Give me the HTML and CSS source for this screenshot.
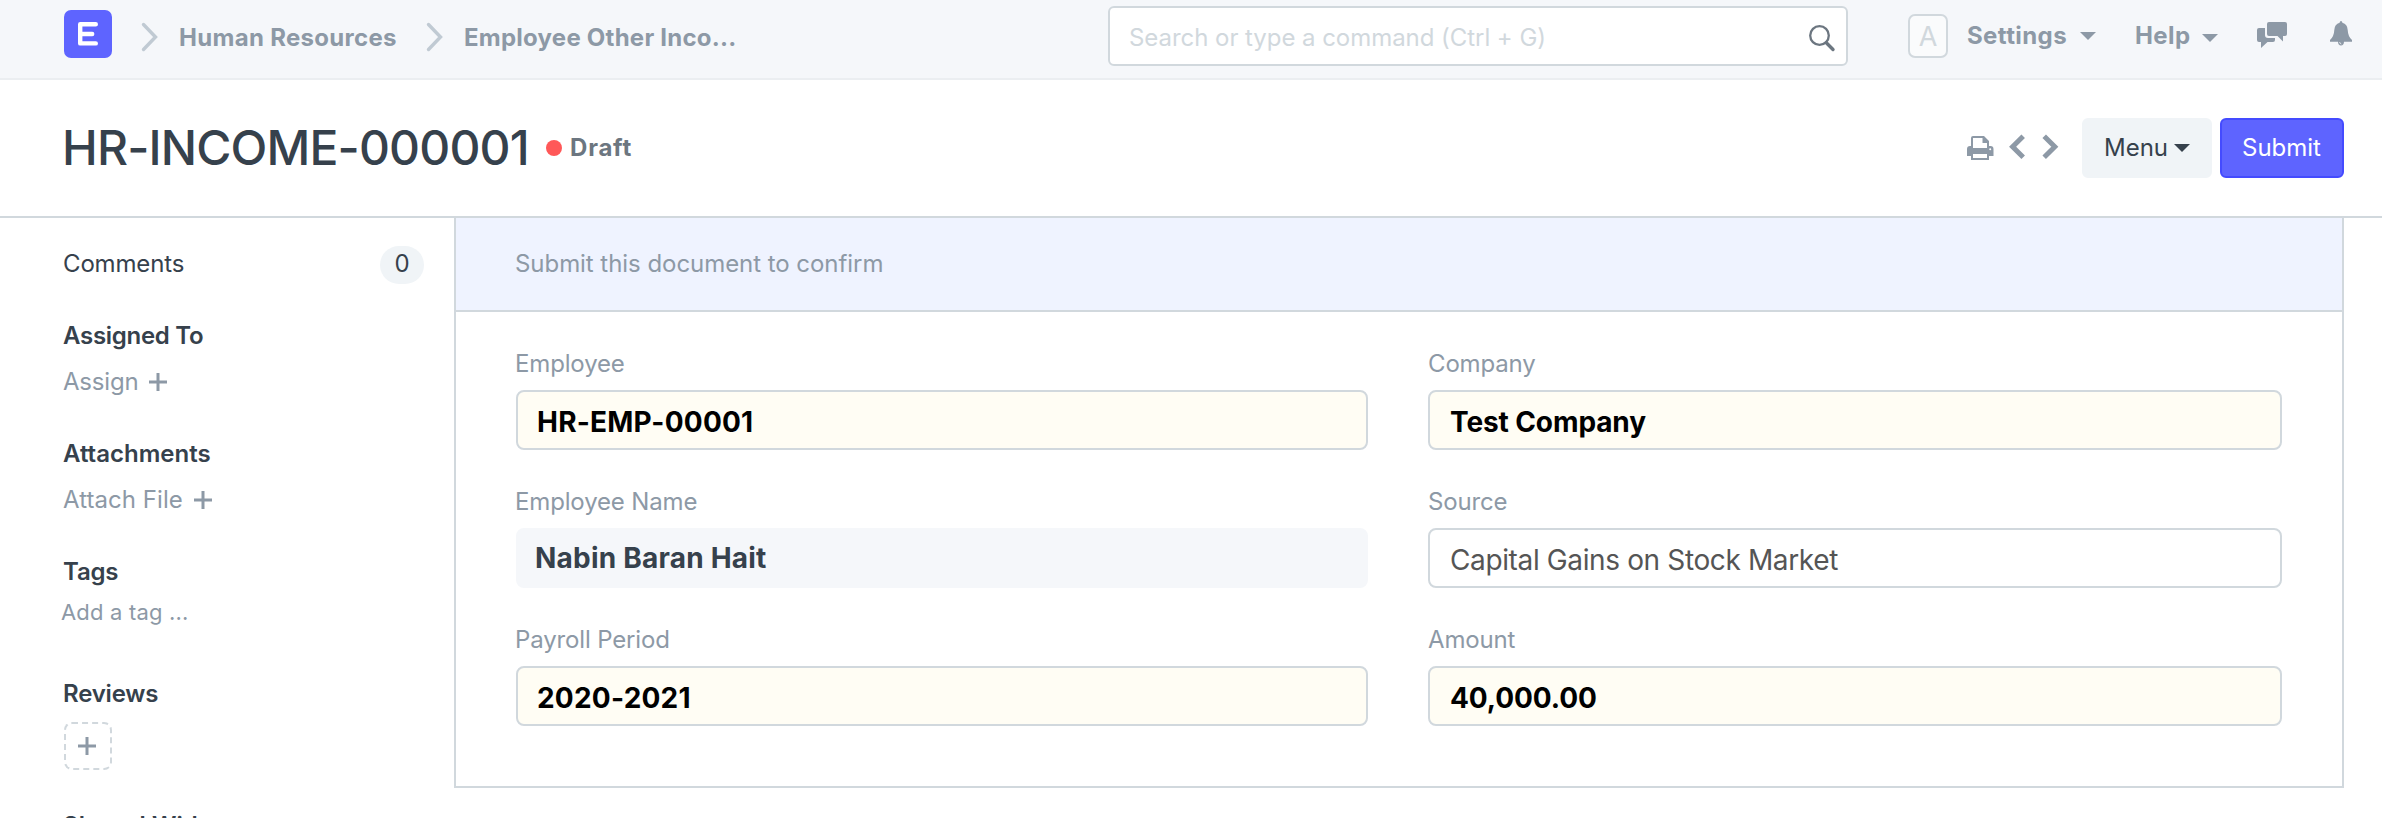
FILE: index.html
```html
<!DOCTYPE html>
<html lang="en">
<head>
<meta charset="utf-8">
<title>HR-INCOME-000001</title>
<link rel="stylesheet" href="styles.css">
</head>
<body>
<header class="navbar">
  <div class="logo"><svg width="48" height="48" viewBox="0 0 48 48"><path d="M31.800 14.200H16.200V33.400H31.800M16.200 24H28.200" fill="none" stroke="#fff" stroke-width="4.400" stroke-linecap="round" stroke-linejoin="round"/></svg></div>
  <nav class="crumbs">
    <svg class="crumb-sep" width="18" height="30" viewBox="0 0 18 30"><path d="M2.500 2.500L14.500 15L2.500 27.500" fill="none" stroke="#c0cad3" stroke-width="3.400" stroke-linecap="round"/></svg>
    <a class="crumb crumb-module">Human Resources</a>
    <svg class="crumb-sep" width="18" height="30" viewBox="0 0 18 30"><path d="M2.500 2.500L14.500 15L2.500 27.500" fill="none" stroke="#c0cad3" stroke-width="3.400" stroke-linecap="round"/></svg>
    <a class="crumb">Employee Other Inco...</a>
  </nav>
  <div class="search">
    <span class="search-text">Search or type a command (Ctrl + G)</span>
    <svg width="28" height="28" viewBox="0 0 28 28"><g fill="none" stroke="#6c7680"><circle cx="11.500" cy="11.500" r="9.300" stroke-width="2.300"/><path d="M18.300 18.800L25 25.500" stroke-width="3.400" stroke-linecap="round"/></g></svg>
  </div>
  <div class="nav-right">
    <span class="avatar">A</span>
    <span class="nav-item settings">Settings</span><i class="caret settings-caret"></i>
    <span class="nav-item help">Help</span><i class="caret help-caret"></i>
    <svg class="chat" width="30" height="27" viewBox="0 0 30 27"><path fill="#8d99a6" d="M12 0H28Q30 0 30 2V12Q30 14 28 14H26V19.500L20.500 14H12Q10 14 10 12V2Q10 0 12 0ZM2 6H8V13Q8 16 11 16H18V18Q18 20 16 20H10.500L4 26V20H2Q0 20 0 18V8Q0 6 2 6Z"/></svg>
    <svg class="bell" width="22" height="25" viewBox="0 0 22 25"><path fill="#8d99a6" d="M11 0Q12.200 0 12.400 1.800Q17.400 3 17.700 9Q18 15.500 22 19V20.700H14Q13.800 24.500 11 24.500Q8.200 24.500 8 20.700H0V19Q4 15.500 4.300 9Q4.600 3 9.600 1.800Q9.800 0 11 0Z"/><path d="M9.600 21Q9.800 22.800 11.300 23" fill="none" stroke="#f5f7fa" stroke-width=".8"/></svg>
  </div>
</header>
<section class="page-head">
  <h1 class="title">HR-INCOME-000001</h1>
  <span class="dot"></span><span class="status">Draft</span>
  <div class="actions">
    <svg class="print" width="27" height="25" viewBox="0 0 27 25"><path fill="#8d99a6" fill-rule="evenodd" d="M6 0H17L22 5V10H23.500Q26.500 10 26.500 13V20H22V24H4V20H0V13Q0 10 3 10H4V2Q4 0 6 0ZM6 2V12H20V7H15.500V2ZM6 18V22H20V18ZM23.200 12.200A1 1 0 1 0 23.200 14.200A1 1 0 1 0 23.200 12.200Z"/></svg>
    <svg class="prev" width="17" height="26" viewBox="0 0 17 26"><path d="M14.200 2.200L3.600 12.800L14.200 23.300" fill="none" stroke="#8d99a6" stroke-width="5"/></svg>
    <svg class="next" width="17" height="26" viewBox="0 0 17 26"><path d="M2.200 2.200L12.800 12.800L2.200 23.300" fill="none" stroke="#8d99a6" stroke-width="5"/></svg>
    <button class="btn btn-menu">Menu<i class="caret"></i></button>
    <button class="btn btn-primary">Submit</button>
  </div>
</section>
<main class="layout">
  <aside class="sidebar">
    <div class="side-row comments"><span>Comments</span><span class="badge">0</span></div>
    <section class="group">
      <h2 class="group-title assigned">Assigned To</h2>
      <a class="group-link assign">Assign<svg class="plus" width="18" height="18" viewBox="0 0 18 18"><path d="M9 0V18M0 9H18" stroke="#8d99a6" stroke-width="3"/></svg></a>
    </section>
    <section class="group">
      <h2 class="group-title attachments">Attachments</h2>
      <a class="group-link attach">Attach File<svg class="plus" width="18" height="18" viewBox="0 0 18 18"><path d="M9 0V18M0 9H18" stroke="#8d99a6" stroke-width="3"/></svg></a>
    </section>
    <section class="group tags">
      <h2 class="group-title">Tags</h2>
      <span class="tag-input">Add a tag ...</span>
    </section>
    <section class="group reviews">
      <h2 class="group-title">Reviews</h2>
      <span class="add-review"><svg width="18" height="18" viewBox="0 0 18 18"><path d="M9 0V18M0 9H18" stroke="#8d99a6" stroke-width="3"/></svg></span>
    </section>
    <section class="group shared"><h2 class="group-title">Shared With</h2></section>
  </aside>
  <article class="form">
    <div class="banner">Submit this document to confirm</div>
    <div class="fields">
      <div class="field"><label class="label">Employee</label><div class="input required link">HR-EMP-00001</div></div>
      <div class="field"><label class="label">Company</label><div class="input required">Test Company</div></div>
      <div class="field"><label class="label">Employee Name</label><div class="input readonly">Nabin Baran Hait</div></div>
      <div class="field"><label class="label">Source</label><div class="input source">Capital Gains on Stock Market</div></div>
      <div class="field"><label class="label">Payroll Period</label><div class="input required link">2020-2021</div></div>
      <div class="field"><label class="label">Amount</label><div class="input required">40,000.00</div></div>
    </div>
  </article>
</main>
</body>
</html>
```
FILE: styles.css
```css
* { box-sizing: border-box; }
html { overflow: hidden; }
body { margin: 0; height: 818px; overflow: hidden; background: #fff; color: #36414c; font: 24px/36px Inter, "Liberation Sans", sans-serif; }
svg { display: block; flex: none; }
h1, h2 { margin: 0; }

.navbar { display: flex; align-items: flex-start; height: 80px; padding-left: 64px; background: #f5f7fa; border-bottom: 2px solid #ebeef1; }
.logo { width: 48px; height: 48px; margin-top: 10px; border-radius: 7px; background: #5e64ff; overflow: hidden; }
.crumbs { display: flex; width: 996px; padding: 20px 0 0 29px; color: #8d99a6; font-weight: 700; letter-spacing: .24px; white-space: nowrap; }
.crumb-sep { margin: 2px 20px 0 0; }
.crumb-module { width: 247px; letter-spacing: .3px; }
.search { display: flex; justify-content: space-between; width: 740px; height: 60px; margin-top: 6px; padding: 12px 10px 0 19px; background: #fff; border: 2px solid #d1d8dd; border-radius: 6px; color: #d1d8dd; letter-spacing: -.05px; }
.search svg { margin-top: 4px; }
.nav-right { display: flex; color: #8d99a6; }
.avatar { width: 40px; height: 44px; margin: 14px 20px 0 60px; border: 2px solid #d1d8dd; border-radius: 7px; background: #fafbfc; color: #d1d8dd; font-size: 27px; line-height: 41px; text-align: center; }
.nav-item { margin-top: 18px; font-weight: 700; letter-spacing: .4px; white-space: nowrap; }
.settings { width: 113px; margin-left: -1px; }
.help { width: 67px; margin-left: 39px; }
.caret { width: 0; height: 0; border: solid transparent; border-width: 8px 8px 0; border-top-color: currentColor; }
.settings-caret { margin-top: 32px; }
.help-caret { margin-top: 34px; }
.chat { margin: 22px 0 0 39px; }
.bell { margin: 21px 0 0 43px; }

.page-head { display: flex; height: 138px; padding: 38px 38px 0 62px; border-bottom: 2px solid #d1d8dd; }
.title { width: 484px; font-size: 48px; line-height: 60px; font-weight: 500; letter-spacing: -.84px; white-space: nowrap; }
.dot { width: 16px; height: 16px; margin: 22px 8px 0 0; border-radius: 50%; background: #ff5858; }
.status { margin-top: 12px; color: #6c7680; font-weight: 700; letter-spacing: .8px; }
.actions { display: flex; margin-left: auto; }
.print { margin: 18px 15px 0 0; }
.prev, .next { margin-top: 16px; }
.prev { margin-right: 16px; }
.next { margin-right: 23px; }
.btn { display: flex; height: 60px; padding: 11px 20px 0; border: 2px solid; border-radius: 6px; font: inherit; line-height: 34px; align-items: flex-start; }
.btn-menu { width: 130px; margin-right: 8px; background: #f0f4f7; border-color: #f0f4f7; color: #36414c; justify-content: space-between; }
.btn-menu .caret { margin-top: 13px; }
.btn-primary { width: 124px; background: #5e64ff; border-color: #444bff; color: #fff; }

.layout { display: flex; height: 600px; overflow: hidden; }
.sidebar { width: 454px; padding: 28px 30px 0 63px; }
.side-row { display: flex; justify-content: space-between; letter-spacing: -.15px; }
.comments { height: 72px; }
.badge { width: 44px; height: 38px; border-radius: 19px; background: #f0f4f7; text-align: center; }
.group { height: 118px; }
.group-title { font-size: 24px; line-height: 36px; font-weight: 600; letter-spacing: -.2px; }
.assigned { letter-spacing: -.28px; }
.attachments { letter-spacing: 0; }
.group-link { display: flex; margin-top: 10px; color: #8d99a6; }
.assign { letter-spacing: -.2px; }
.attach { letter-spacing: .06px; }
.plus { margin: 9px 0 0 11px; }
.tags { height: 122px; }
.tag-input { display: block; margin: 6px 0 0 -2px; font-size: 22px; line-height: 32px; letter-spacing: .18px; color: #8d99a6; }
.reviews { height: 132px; }
.add-review { display: flex; align-items: center; justify-content: center; width: 48px; height: 48px; margin: 10px 0 0 1px; padding-right: 2px; border: 2px dashed #d1d8dd; border-radius: 8px; }
.shared { height: 36px; }
.shared .group-title { letter-spacing: .1px; }

.form { width: 1890px; height: 570px; border: solid #d1d8dd; border-width: 0 2px 2px; }
.banner { height: 94px; padding: 28px 0 0 59px; background: #eff3ff; border-bottom: 2px solid #d1d8dd; color: #8d99a6; letter-spacing: -.05px; }
.fields { display: grid; grid-template-columns: 852px 854px; column-gap: 60px; row-gap: 34px; padding: 34px 60px 0; }
.label { display: block; margin: 0 0 8px -1px; color: #8d99a6; letter-spacing: -.15px; }
.field:nth-child(even) .label { margin-left: 0; }
.input { height: 60px; padding: 2px 20px 0; border: 2px solid #d1d8dd; border-radius: 8px; font-size: 28px; line-height: 56px; color: #555; }
.source { letter-spacing: -.37px; }
.required { background: #fffdf4; color: #000; font-weight: 700; letter-spacing: -.1px; }
.link { padding-left: 19px; letter-spacing: .22px; }
.readonly { padding: 0 17px; background: #f5f7fa; border-color: #f5f7fa; color: #36414c; font-weight: 700; letter-spacing: .22px; }
```
